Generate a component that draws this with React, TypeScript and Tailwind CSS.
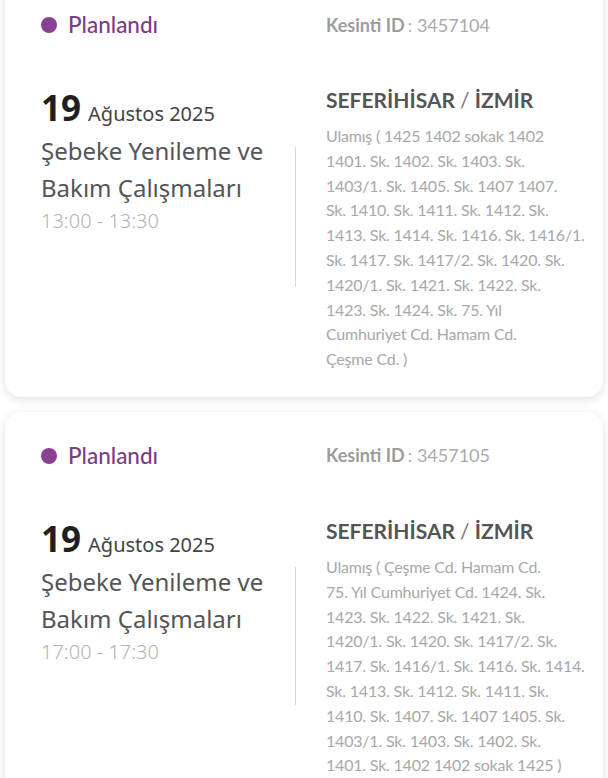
const outages = [
  {
    id: "3457104",
    time: "13:00 - 13:30",
    divider: "mt-[109px] h-[140px]",
    top: "-mt-[19px]",
    address: [
      "Ulamış ( 1425 1402 sokak 1402",
      "1401. Sk. 1402. Sk. 1403. Sk.",
      "1403/1. Sk. 1405. Sk. 1407 1407.",
      "Sk. 1410. Sk. 1411. Sk. 1412. Sk.",
      "1413. Sk. 1414. Sk. 1416. Sk. 1416/1.",
      "Sk. 1417. Sk. 1417/2. Sk. 1420. Sk.",
      "1420/1. Sk. 1421. Sk. 1422. Sk.",
      "1423. Sk. 1424. Sk. 75. Yıl",
      "Cumhuriyet Cd. Hamam Cd.",
      "Çeşme Cd. )",
    ],
  },
  {
    id: "3457105",
    time: "17:00 - 17:30",
    divider: "mt-[98px] h-[138px]",
    top: "mt-[15px]",
    address: [
      "Ulamış ( Çeşme Cd. Hamam Cd.",
      "75. Yıl Cumhuriyet Cd. 1424. Sk.",
      "1423. Sk. 1422. Sk. 1421. Sk.",
      "1420/1. Sk. 1420. Sk. 1417/2. Sk.",
      "1417. Sk. 1416/1. Sk. 1416. Sk. 1414.",
      "Sk. 1413. Sk. 1412. Sk. 1411. Sk.",
      "1410. Sk. 1407. Sk. 1407 1405. Sk.",
      "1403/1. Sk. 1403. Sk. 1402. Sk.",
      "1401. Sk. 1402 1402 sokak 1425 )",
    ],
  },
];

function OutageCard({ o }: { o: (typeof outages)[number] }) {
  return (
    <div className={`${o.top} bg-white rounded-[16px] shadow-[0_2px_8px_rgba(0,0,0,0.13)] pl-[36px] pr-[28px] pt-[31px] pb-[25px]`}>
      <div className="grid grid-cols-[254px_1px_1fr]">
        {/* header */}
        <div className="flex items-center gap-[11px] h-[26px]">
          <span className="w-[16px] h-[16px] rounded-full bg-[#8b4193]" />
          <span className="text-[22.5px] text-[#7c3d85] font-medium font-['Lato',sans-serif]">Planlandı</span>
        </div>
        <div />
        <div className="pl-[30px] h-[26px] flex items-center text-[18px] font-['Lato',sans-serif]">
          <span className="font-bold text-[#9c9c9c]">Kesinti ID</span>
          <span className="text-[#ababab] ml-[3px]">: {o.id}</span>
        </div>

        {/* body */}
        <div className="mt-[50px] font-['Noto_Sans',sans-serif]">
          <div className="flex items-baseline gap-[7px] leading-[40px]">
            <span className="text-[35px] font-bold text-[#1f1f1f]">19</span>
            <span className="text-[20px] text-[#444]">Ağustos 2025</span>
          </div>
          <div className="text-[24px] leading-[37px] text-[#555] mt-[-2px] whitespace-nowrap">
            Şebeke Yenileme ve
            <br />
            Bakım Çalışmaları
          </div>
          <div className="text-[20px] leading-[30px] text-[#b3b3b3] font-light">{o.time}</div>
        </div>
        <div className={`${o.divider} bg-[#d8d8d8]`} />
        <div className="pl-[30px] mt-[47px] font-['Lato',sans-serif]">
          <div className="text-[21px] font-bold text-[#555] leading-[30px]">
            SEFERİHİSAR <span className="font-normal text-[#777]">/</span> İZMİR
          </div>
          <p className="text-[16px] leading-[24.8px] text-[#a8a8a8] tracking-[-0.2px] mt-[9px]">
            {o.address.map((line, i) => (
              <span key={i} className="block whitespace-nowrap">
                {line}
              </span>
            ))}
          </p>
        </div>
      </div>
    </div>
  );
}

export default function App() {
  return (
    <div className="w-[608px] h-[778px] overflow-hidden bg-white px-[5px]">
      {outages.map((o) => (
        <OutageCard key={o.id} o={o} />
      ))}
    </div>
  );
}
